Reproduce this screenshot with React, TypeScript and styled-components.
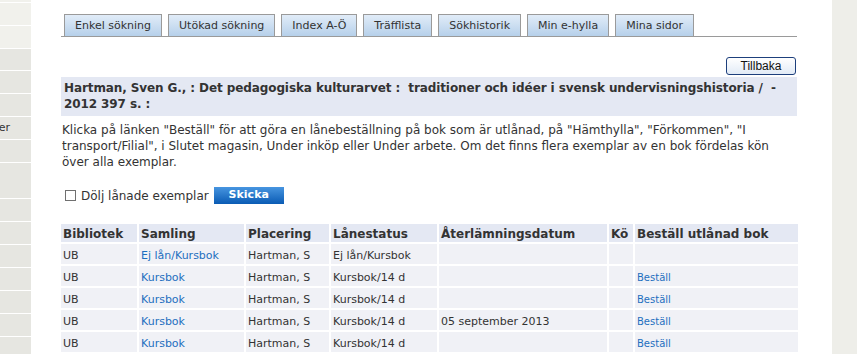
import * as React from 'react';
import styled, { createGlobalStyle } from 'styled-components';

const GlobalStyle = createGlobalStyle`
    * {
        box-sizing: border-box;
    }
    body {
        margin: 0;
        background: #fff;
        font-family: "DejaVu Sans", Verdana, sans-serif;
        color: #333;
    }
`;

const tabs = ['Enkel sökning', 'Utökad sökning', 'Index A-Ö', 'Träfflista', 'Sökhistorik', 'Min e-hylla', 'Mina sidor'];

interface NavItem {
    label: string;
    height: number;
    light?: boolean;
}

const navItems: NavItem[] = [
    { label: '', height: 3, light: true },
    { label: '', height: 23, light: true },
    { label: '', height: 23, light: true },
    { label: '', height: 22 },
    { label: '', height: 23 },
    { label: '', height: 23 },
    { label: 'Databaser', height: 23 },
    { label: '', height: 23 },
    { label: '', height: 36 },
    { label: '', height: 23 },
    { label: '', height: 23 },
    { label: '', height: 23 },
    { label: '', height: 23 },
    { label: '', height: 23 },
    { label: '', height: 23 },
    { label: '', height: 23 },
];

interface Holding {
    library: string;
    collection: string;
    shelf: string;
    status: string;
    due: string;
    queue: string;
    orderable: boolean;
}

const holdings: Holding[] = [
    { library: 'UB', collection: 'Ej lån/Kursbok', shelf: 'Hartman, S', status: 'Ej lån/Kursbok', due: '', queue: '', orderable: false },
    { library: 'UB', collection: 'Kursbok', shelf: 'Hartman, S', status: 'Kursbok/14 d', due: '', queue: '', orderable: true },
    { library: 'UB', collection: 'Kursbok', shelf: 'Hartman, S', status: 'Kursbok/14 d', due: '', queue: '', orderable: true },
    { library: 'UB', collection: 'Kursbok', shelf: 'Hartman, S', status: 'Kursbok/14 d', due: '05 september 2013', queue: '', orderable: true },
    { library: 'UB', collection: 'Kursbok', shelf: 'Hartman, S', status: 'Kursbok/14 d', due: '', queue: '', orderable: true },
];

const columns = [
    { label: 'Bibliotek', width: 76 },
    { label: 'Samling', width: 105 },
    { label: 'Placering', width: 83 },
    { label: 'Lånestatus', width: 106 },
    { label: 'Återlämningsdatum', width: 168 },
    { label: 'Kö', width: 24 },
    { label: 'Beställ utlånad bok', width: 163 },
];

export default function App() {
    return (
        <>
            <GlobalStyle />
            <Page>
                <LeftNav>
                    {navItems.map((item, i) => (
                        <NavRow key={i} $height={item.height} $light={item.light}>{item.label}</NavRow>
                    ))}
                </LeftNav>

                <Main>
                    <TabBar>
                        {tabs.map(t => <Tab key={t}>{t}</Tab>)}
                    </TabBar>

                    <BackRow>
                        <BackButton type="button">Tillbaka</BackButton>
                    </BackRow>

                    <TitleBox>
                        Hartman, Sven G., : Det pedagogiska kulturarvet :{'\u00a0 '}traditioner och idéer i svensk undervisningshistoria /{'\u00a0 '}-
                        <br />
                        2012 397 s. :
                    </TitleBox>

                    <Intro>
                        Klicka på länken "Beställ" för att göra en lånebeställning på bok som är utlånad, på "Hämthylla", "Förkommen", "I transport/Filial", i Slutet magasin, Under inköp eller Under arbete. Om det finns flera exemplar av en bok fördelas kön över alla exemplar.
                    </Intro>

                    <FilterForm onSubmit={e => e.preventDefault()}>
                        <CheckLabel>
                            <Check type="checkbox" />
                            Dölj lånade exemplar
                        </CheckLabel>
                        <SubmitButton type="submit">Skicka</SubmitButton>
                    </FilterForm>

                    <HoldingsTable>
                        <colgroup>
                            {columns.map(c => <col key={c.label} style={{ width: c.width }} />)}
                        </colgroup>
                        <thead>
                            <tr>
                                {columns.map(c => <Th key={c.label}>{c.label}</Th>)}
                            </tr>
                        </thead>
                        <tbody>
                            {holdings.map((h, i) => (
                                <tr key={i}>
                                    <Td>{h.library}</Td>
                                    <Td><Link href="#">{h.collection}</Link></Td>
                                    <Td>{h.shelf}</Td>
                                    <Td>{h.status}</Td>
                                    <Td>{h.due}</Td>
                                    <Td>{h.queue}</Td>
                                    <Td>{h.orderable && <SmallLink href="#">Beställ</SmallLink>}</Td>
                                </tr>
                            ))}
                        </tbody>
                    </HoldingsTable>
                </Main>

                <RightRail />
            </Page>
        </>
    );
}

const Page = styled.div`
    display: flex;
    height: 354px;
    overflow: hidden;
`;

const LeftNav = styled.nav`
    flex-shrink: 0;
    width: 91px;
    margin-left: -60px;
    display: flex;
    flex-direction: column;
`;

const NavRow = styled.div<{ $height: number; $light?: boolean }>`
    flex-shrink: 0;
    height: ${props => props.$height}px;
    background: ${props => props.$light ? '#f1f1ec' : '#e6e6e1'};
    border-bottom: 1px solid #fff;
    font-size: 11px;
    line-height: ${props => props.$height - 1}px;
    color: #333;
    padding-left: 13px;
    white-space: nowrap;
    overflow: hidden;
`;

const Main = styled.main`
    flex-shrink: 0;
    width: 736px;
    margin-left: 30px;
`;

const TabBar = styled.div`
    display: flex;
    gap: 6px;
    margin-top: 14px;
    padding-left: 3px;
    border-bottom: 1px solid #9a9a9a;
`;

const Tab = styled.a`
    height: 22px;
    padding: 0 10px;
    border: 1px solid #9a9a9a;
    border-bottom: 0;
    background: linear-gradient(#e1ecf8, #b6d0ea);
    font-size: 11px;
    line-height: 21px;
    color: #333;
    white-space: nowrap;
`;

const BackRow = styled.div`
    display: flex;
    justify-content: flex-end;
    margin-top: 20px;
    padding-right: 1px;
`;

const BackButton = styled.button`
    width: 70px;
    height: 18px;
    padding: 0;
    border: 1px solid #1d3f7c;
    border-radius: 3px;
    background: linear-gradient(#ffffff, #e2ebf6);
    font-family: "Liberation Sans", Arial, sans-serif;
    font-size: 12px;
    line-height: 16px;
    color: #111;
`;

const TitleBox = styled.div`
    margin-top: 2px;
    padding: 3px 3px 4px;
    background: #e4e8f3;
    font-size: 12px;
    font-weight: bold;
    line-height: 16px;
    letter-spacing: -0.1px;
    color: #333;
`;

const Intro = styled.p`
    margin: 6px 0 0;
    padding-left: 1px;
    font-size: 12px;
    line-height: 16px;
    color: #333;
`;

const FilterForm = styled.form`
    display: flex;
    align-items: center;
    height: 19px;
    margin-top: 16px;
    padding-left: 4px;
`;

const CheckLabel = styled.label`
    display: flex;
    align-items: center;
    gap: 5px;
    font-size: 12px;
    color: #333;
`;

const Check = styled.input`
    appearance: none;
    width: 11px;
    height: 11px;
    margin: 0;
    border: 1px solid #707070;
    background: #fff;
`;

const SubmitButton = styled.button`
    width: 70px;
    height: 17px;
    margin-left: 5px;
    padding: 0 0 2px;
    border: 0;
    background: linear-gradient(#4795e0, #0a5bb4);
    font-family: "DejaVu Sans", Verdana, sans-serif;
    font-size: 11px;
    font-weight: bold;
    color: #fff;
`;

const HoldingsTable = styled.table`
    table-layout: fixed;
    width: 740px;
    margin: 17px 0 0 -2px;
    border-collapse: separate;
    border-spacing: 2px;
`;

const Th = styled.th`
    height: 18px;
    padding: 1px 2px 0;
    background: #e4e8f3;
    font-size: 12px;
    font-weight: bold;
    line-height: 16px;
    text-align: left;
    color: #333;
    white-space: nowrap;
`;

const Td = styled.td`
    height: 20px;
    padding: 3px 2px 0;
    background: #f0f1f6;
    font-size: 11px;
    line-height: 16px;
    color: #333;
    white-space: nowrap;
`;

const Link = styled.a`
    color: #1e6fbf;
    text-decoration: none;
`;

const SmallLink = styled(Link)`
    font-size: 10px;
`;

const RightRail = styled.aside`
    flex: 1;
    margin-left: 35px;
    background: #eeeee9;
`;
